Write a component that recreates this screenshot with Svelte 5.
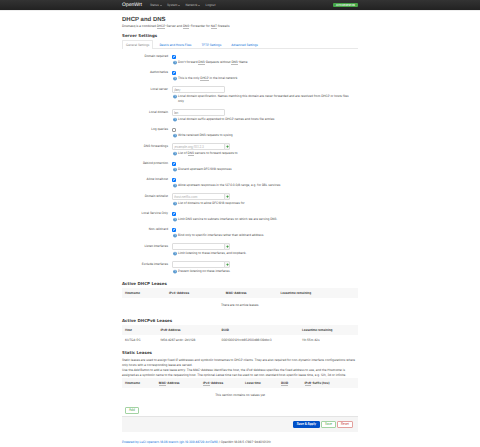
<script lang="ts">
	type Field = {
		id: string;
		label: string;
		kind: "check" | "text" | "list";
		checked?: boolean;
		value?: string;
		placeholder?: string;
		help: string;
	};

	type Column = { title: string; width: number };

	let fields: Field[] = [
		{ id: "domainneeded", label: "Domain required", kind: "check", checked: true, help: "Don't forward <abbr>DNS</abbr>-Requests without <abbr>DNS</abbr>-Name" },
		{ id: "authoritative", label: "Authoritative", kind: "check", checked: true, help: "This is the only <abbr>DHCP</abbr> in the local network" },
		{ id: "local", label: "Local server", kind: "text", value: "/lan/", help: "Local domain specification. Names matching this domain are never forwarded and are resolved from DHCP or hosts files only" },
		{ id: "domain", label: "Local domain", kind: "text", value: "lan", help: "Local domain suffix appended to DHCP names and hosts file entries" },
		{ id: "logqueries", label: "Log queries", kind: "check", checked: false, help: "Write received DNS requests to syslog" },
		{ id: "server", label: "DNS forwardings", kind: "list", placeholder: "/example.org/10.1.2.3", help: "List of <abbr>DNS</abbr> servers to forward requests to" },
		{ id: "rebind", label: "Rebind protection", kind: "check", checked: true, help: "Discard upstream RFC1918 responses" },
		{ id: "localhost", label: "Allow localhost", kind: "check", checked: true, help: "Allow upstream responses in the 127.0.0.0/8 range, e.g. for RBL services" },
		{ id: "whitelist", label: "Domain whitelist", kind: "list", placeholder: "ihost.netflix.com", help: "List of domains to allow RFC1918 responses for" },
		{ id: "localservice", label: "Local Service Only", kind: "check", checked: true, help: "Limit DNS service to subnets interfaces on which we are serving DNS." },
		{ id: "nonwildcard", label: "Non-wildcard", kind: "check", checked: true, help: "Bind only to specific interfaces rather than wildcard address." },
		{ id: "interface", label: "Listen Interfaces", kind: "list", placeholder: "", help: "Limit listening to these interfaces, and loopback." },
		{ id: "notinterface", label: "Exclude interfaces", kind: "list", placeholder: "", help: "Prevent listening on these interfaces." }
	];

	let tabs = ["General Settings", "Resolv and Hosts Files", "TFTP Settings", "Advanced Settings"];
	let activeTab = tabs[0];

	let leaseColumns: Column[] = [
		{ title: "Hostname", width: 18 },
		{ title: "IPv4-Address", width: 24 },
		{ title: "MAC-Address", width: 23 },
		{ title: "Leasetime remaining", width: 35 }
	];

	let lease6Columns: Column[] = [
		{ title: "Host", width: 14 },
		{ title: "IPv6-Address", width: 26 },
		{ title: "DUID", width: 35 },
		{ title: "Leasetime remaining", width: 25 }
	];

	let leases6 = [["KUTGA-PC", "fd54:4267:acdc::2b1/128", "000100012fccb652f00d86139dbc3", "11h 55m 42s"]];

	let staticColumns: Column[] = [
		{ title: "Hostname", width: 14 },
		{ title: "<abbr>MAC</abbr>-Address", width: 19 },
		{ title: "<abbr>IPv4</abbr>-Address", width: 18 },
		{ title: "Lease time", width: 15 },
		{ title: "<abbr>DUID</abbr>", width: 9 },
		{ title: "<abbr>IPv6</abbr>-Suffix (hex)", width: 25 }
	];
</script>

<header>
	<div class="container bar">
		<a class="brand" href="#top">OpenWrt</a>
		<nav>
			<a href="#status">Status <i class="caret"></i></a>
			<a href="#system">System <i class="caret"></i></a>
			<a href="#network">Network <i class="caret"></i></a>
			<a href="#logout">Logout</a>
		</nav>
		<button class="refresh">AUTO REFRESH ON</button>
	</div>
</header>

<main class="container">
	<h1>DHCP and DNS</h1>
	<p class="intro">
		Dnsmasq is a combined <abbr>DHCP</abbr>-Server and <abbr>DNS</abbr>-Forwarder for <abbr>NAT</abbr> firewalls
	</p>

	<h2>Server Settings</h2>
	<ul class="tabs">
		{#each tabs as tab}
			<li class:active={tab === activeTab}>
				<a href="#tab" on:click|preventDefault={() => (activeTab = tab)}>{tab}</a>
			</li>
		{/each}
	</ul>

	<div class="fields">
		{#each fields as field}
			<div class="row" class:tall={field.kind !== "check"}>
				<label for={field.id}>{field.label}</label>
				<div class="value">
					<div class="control">
						{#if field.kind === "check"}
							<input type="checkbox" id={field.id} bind:checked={field.checked} />
						{:else}
							<input type="text" id={field.id} bind:value={field.value} placeholder={field.placeholder} />
							{#if field.kind === "list"}
								<button class="plus" aria-label="Add entry">
									<svg viewBox="0 0 8 8"><path d="M3 1h2v2h2v2H5v2H3V5H1V3h2z" fill="#3a9d3a" /></svg>
								</button>
							{/if}
						{/if}
					</div>
					<div class="help">
						<svg viewBox="0 0 16 16">
							<circle cx="8" cy="8" r="7.5" fill="#4a90cc" />
							<path d="M5.5 6.2C5.5 3 10.7 3 10.7 6.2 10.7 8 8.1 8 8.1 10M8.1 11.5v2" fill="none" stroke="#fff" stroke-width="1.8" />
						</svg>
						<span>{@html field.help}</span>
					</div>
				</div>
			</div>
		{/each}
	</div>

	<h2>Active DHCP Leases</h2>
	<table>
		<thead>
			<tr>
				{#each leaseColumns as col}
					<th style="width: {col.width}%">{col.title}</th>
				{/each}
			</tr>
		</thead>
		<tbody>
			<tr class="empty"><td colspan="4">There are no active leases.</td></tr>
		</tbody>
	</table>

	<h2 class="spaced">Active DHCPv6 Leases</h2>
	<table>
		<thead>
			<tr>
				{#each lease6Columns as col}
					<th style="width: {col.width}%">{col.title}</th>
				{/each}
			</tr>
		</thead>
		<tbody>
			{#each leases6 as lease}
				<tr>
					{#each lease as cell}
						<td>{cell}</td>
					{/each}
				</tr>
			{/each}
		</tbody>
	</table>

	<h2 class="spaced">Static Leases</h2>
	<div class="description">
		<p>
			Static leases are used to assign fixed IP addresses and symbolic hostnames to DHCP clients. They are also required for non-dynamic interface configurations where only hosts with a corresponding lease are served.
		</p>
		<p>
			Use the <em>Add</em> Button to add a new lease entry. The <em>MAC-Address</em> identifies the host, the <em>IPv4-Address</em> specifies the fixed address to use, and the <em>Hostname</em> is assigned as a symbolic name to the requesting host. The optional <em>Lease time</em> can be used to set non-standard host-specific lease time, e.g. 12h, 3d or infinite.
		</p>
	</div>
	<table>
		<thead>
			<tr>
				{#each staticColumns as col}
					<th style="width: {col.width}%">{@html col.title}</th>
				{/each}
			</tr>
		</thead>
		<tbody>
			<tr class="empty"><td colspan="6">This section contains no values yet</td></tr>
		</tbody>
	</table>
	<button class="btn positive add">Add</button>

	<div class="actions">
		<button class="btn apply">Save &amp; Apply</button>
		<button class="btn positive">Save</button>
		<button class="btn negative">Reset</button>
	</div>
</main>

<footer>
	<div class="container">
		<a href="#luci">Powered by LuCI openwrt-18.06 branch (git-19.309.48729-bc17ef6)</a> / OpenWrt 18.06.5 r7897-9d401013fc
	</div>
</footer>

<style>
	:global(body) {
		background: #fff;
		color: #404040;
		font-family: Inter, "Liberation Sans", sans-serif;
		font-size: 3px;
		line-height: 5px;
		text-rendering: geometricPrecision;
	}

	:global(abbr) {
		border-bottom: 1px solid #bbb;
		display: inline-block;
		line-height: 3px;
	}

	a {
		color: #0069d6;
		text-decoration: none;
	}

	button,
	input {
		box-sizing: border-box;
		margin: 0;
		padding: 0;
		font: inherit;
	}

	.container {
		box-sizing: border-box;
		width: 100%;
		max-width: 236px;
		margin: 0 auto;
	}

	header {
		background: linear-gradient(#333, #222);
		box-shadow: 0 0 1px rgba(0, 0, 0, 0.4);
	}

	.bar {
		display: flex;
		align-items: center;
		height: 10px;
	}

	.brand {
		color: #fff;
		font-family: "Liberation Sans", sans-serif;
		font-size: 5px;
	}

	nav {
		display: flex;
		gap: 5px;
		margin-left: 8px;
	}

	nav a {
		display: flex;
		align-items: center;
		gap: 1px;
		color: #bfbfbf;
	}

	.caret {
		border: 1px solid transparent;
		border-top-color: #999;
		border-bottom: 0;
	}

	.refresh {
		width: 25px;
		height: 4px;
		margin-left: auto;
		border: 0;
		border-radius: 1px;
		background: #46a546;
		color: #fff;
		font-size: 2px;
		font-weight: bold;
		line-height: 4px;
	}

	h1,
	h2,
	p {
		margin: 0;
	}

	h1 {
		margin-top: 6px;
		font-family: "Liberation Sans", sans-serif;
		font-size: 6px;
		line-height: 8px;
	}

	h2 {
		font-family: "DejaVu Sans", sans-serif;
		font-size: 4px;
		line-height: 8px;
	}

	.intro {
		margin-bottom: 3px;
	}

	.tabs {
		display: flex;
		gap: 2px;
		margin: 0 0 4px;
		padding: 0;
		border-bottom: 1px solid #e8e8e8;
		list-style: none;
	}

	.tabs li {
		margin-bottom: -1px;
		padding: 1px 3px;
		border: 1px solid transparent;
		border-bottom: 0;
		line-height: 6px;
	}

	.tabs .active {
		border-color: #e8e8e8;
		border-radius: 1px 1px 0 0;
		background: #fff;
	}

	.tabs .active a {
		color: #808080;
	}

	.row {
		display: flex;
		gap: 4px;
		margin-bottom: 4px;
	}

	.row label {
		flex: 0 0 46px;
		line-height: 7px;
		text-align: right;
	}

	.value {
		flex: 1;
		padding-right: 6px;
	}

	.control {
		display: flex;
		align-items: center;
		height: 7px;
	}

	.tall label {
		line-height: 9px;
	}

	.tall .control {
		height: 9px;
	}

	input[type="checkbox"] {
		display: flex;
		align-items: center;
		justify-content: center;
		appearance: none;
		width: 4px;
		height: 4px;
		border: 1px solid #999;
		border-radius: 1px;
		background: #fff;
	}

	input[type="checkbox"]:checked {
		border: 0;
		background: #0075ff;
	}

	input[type="checkbox"]:checked::before {
		width: 3px;
		height: 3px;
		background: #fff;
		clip-path: polygon(0 55%, 15% 40%, 38% 62%, 85% 12%, 100% 28%, 38% 92%);
		content: "";
	}

	input[type="text"] {
		width: 53px;
		height: 7px;
		padding: 0 1px;
		border: 1px solid #ddd;
		border-radius: 1px;
		color: #808080;
	}

	input::placeholder {
		color: #aaa;
	}

	.plus {
		display: flex;
		align-items: center;
		justify-content: center;
		width: 6px;
		height: 7px;
		margin-left: -1px;
		border: 1px solid #ddd;
		border-radius: 0 1px 1px 0;
		background: #f5f5f5;
	}

	.plus svg {
		width: 3px;
		height: 3px;
	}

	.help {
		display: flex;
		gap: 1px;
		padding-left: 1px;
	}

	.help svg {
		flex: none;
		width: 4px;
		height: 5px;
	}

	.fields + h2 {
		margin-top: 6px;
	}

	h2.spaced {
		margin-top: 4px;
	}

	table {
		width: 100%;
		border-collapse: collapse;
		table-layout: fixed;
	}

	th,
	td {
		height: 10px;
		padding: 0 3px;
		text-align: left;
	}

	th {
		background: #f7f7f7;
	}

	.empty td {
		height: 15px;
		text-align: center;
	}

	.description {
		padding: 1px 3px 0 0;
	}

	.btn {
		height: 7px;
		padding: 0 3px;
		border: 1px solid;
		border-radius: 1px;
		background: #fff;
		line-height: 5px;
	}

	.positive {
		border-color: #a3d3a3;
		color: #46a546;
	}

	.negative {
		border-color: #e3a09d;
		color: #c43c35;
	}

	.apply {
		border-color: #0050c8;
		background: #0050c8;
		color: #fff;
		font-weight: bold;
	}

	.add {
		display: block;
		margin: 4px 3px 2px;
	}

	.actions {
		display: flex;
		justify-content: flex-end;
		gap: 1px;
		padding: 4px 5px;
		border-top: 1px solid #e4e4e4;
		background: #f5f5f5;
	}

	footer {
		padding: 8px 0 1px;
	}
</style>
